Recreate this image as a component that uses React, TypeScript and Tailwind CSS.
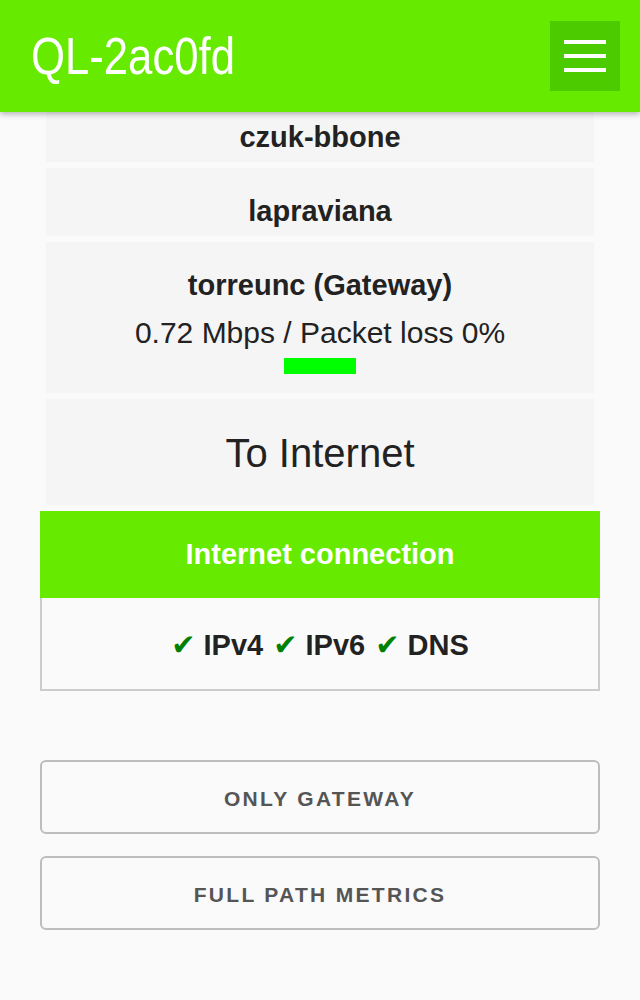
import type { ReactNode } from 'react'

type Hop = {
  name: string
  metrics?: string
  quality?: number
}

const hops: Hop[] = [
  { name: 'czuk-bbone' },
  { name: 'lapraviana' },
  { name: 'torreunc (Gateway)', metrics: '0.72 Mbps / Packet loss 0%', quality: 72 },
]

const checks = ['IPv4', 'IPv6', 'DNS']

function HopCard({ hop }: { hop: Hop }) {
  return (
    <div className={`bg-[#f5f5f5] px-4 pt-[27px] text-center text-[#222] ${hop.metrics ? 'pb-[19px]' : 'pb-[9px]'}`}>
      <div className="text-[29px] leading-[32px] font-bold">{hop.name}</div>
      {hop.metrics && (
        <>
          <div className="mt-[15px] text-[30px] leading-[34px]">{hop.metrics}</div>
          <div className="mt-[8px] flex justify-center">
            <div className="h-4 bg-[#00ff00]" style={{ width: hop.quality }} />
          </div>
        </>
      )}
    </div>
  )
}

function OutlineButton({ children }: { children: ReactNode }) {
  return (
    <button className="h-[74px] w-full rounded-[6px] border-2 border-[#bdbdbd] bg-transparent pt-[4px] text-[21px] font-bold tracking-[2.3px] text-[#555] uppercase">
      {children}
    </button>
  )
}

export default function App() {
  return (
    <div className="min-h-[1000px] bg-[#fafafa] font-['Liberation_Sans',Arial,sans-serif]">
      <header className="fixed inset-x-0 top-0 z-10 flex h-[112px] items-center justify-between bg-[#66eb00] pr-5 pl-[31px] shadow-[0_2px_6px_rgba(0,0,0,0.3)]">
        <h1 className="origin-left scale-x-[0.84] text-[52px] leading-none text-white">QL-2ac0fd</h1>
        <button className="flex h-[70px] w-[70px] flex-col items-center justify-center gap-[10px] bg-[#4ccc00]">
          <span className="block h-1 w-[42px] bg-white" />
          <span className="block h-1 w-[42px] bg-white" />
          <span className="block h-1 w-[42px] bg-white" />
        </button>
      </header>

      <main className="px-10 pt-[94px] pb-16">
        <div className="flex flex-col gap-[6px] px-[6px]">
          {hops.map((hop) => (
            <HopCard key={hop.name} hop={hop} />
          ))}
          <div className="flex h-[106px] items-center justify-center bg-[#f5f5f5] pt-[2px] text-[40px] text-[#222]">
            To Internet
          </div>
        </div>

        <section className="mt-[6px]">
          <div className="flex h-[87px] items-center justify-center bg-[#66eb00] text-[29px] font-bold text-white">
            Internet connection
          </div>
          <div className="flex h-[93px] items-center justify-center border-2 border-t-0 border-[#cccccc] pt-[4px] text-[29px] font-bold text-[#222]">
            {checks.map((c, i) => (
              <span key={c} className={i > 0 ? 'ml-[10px]' : ''}>
                <span className="font-['DejaVu_Sans',sans-serif] text-[#008000]">✔</span> {c}
              </span>
            ))}
          </div>
        </section>

        <div className="mt-[69px] flex flex-col gap-[22px]">
          <OutlineButton>Only gateway</OutlineButton>
          <OutlineButton>Full path metrics</OutlineButton>
        </div>
      </main>
    </div>
  )
}
